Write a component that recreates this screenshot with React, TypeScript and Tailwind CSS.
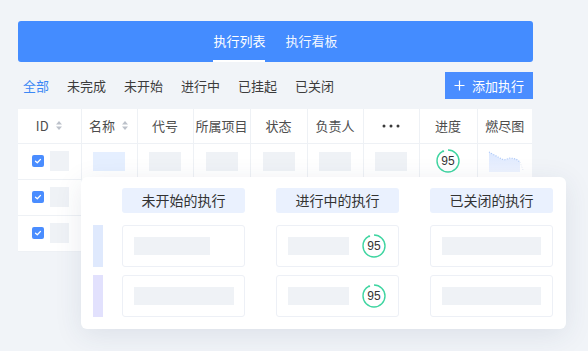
import React from "react"

const filters = ["全部", "未完成", "未开始", "进行中", "已挂起", "已关闭"]

const columns = [
  { label: "ID", w: "w-[63px]", sort: true },
  { label: "名称", w: "w-[56px]", sort: true },
  { label: "代号", w: "w-[56px]" },
  { label: "所属项目", w: "w-[57px]" },
  { label: "状态", w: "w-[57px]" },
  { label: "负责人", w: "w-[56px]" },
  { label: "more", w: "w-[56px]" },
  { label: "进度", w: "w-[58px]" },
  { label: "燃尽图", w: "w-[55px]" },
]

function SortIcon() {
  return (
    <svg width="8" height="11" viewBox="0 0 8 11" className="ml-[6px]">
      <path d="M4 1 L7 4.5 L1 4.5 Z" fill="#bcc1ca" />
      <path d="M4 10 L7 6.5 L1 6.5 Z" fill="#bcc1ca" />
    </svg>
  )
}

function Dots() {
  return (
    <svg width="18" height="4" viewBox="0 0 18 4">
      <circle cx="2" cy="2" r="1.5" fill="#3a3a3a" />
      <circle cx="9" cy="2" r="1.5" fill="#3a3a3a" />
      <circle cx="16" cy="2" r="1.5" fill="#3a3a3a" />
    </svg>
  )
}

function Check() {
  return (
    <div className="flex h-3 w-3 items-center justify-center rounded-[2px] bg-[#4a8dff]">
      <svg width="8" height="8" viewBox="0 0 8 8">
        <polyline points="1.5,4.2 3.3,5.8 6.5,2.4" fill="none" stroke="#fff" strokeWidth="1.3" strokeLinecap="round" strokeLinejoin="round" />
      </svg>
    </div>
  )
}

function Ring() {
  const r = 11
  const c = 2 * Math.PI * r
  return (
    <div className="relative flex h-[24px] w-[24px] items-center justify-center">
      <svg width="24" height="24" viewBox="0 0 24 24" className="absolute inset-0">
        <circle
          cx="12"
          cy="12"
          r={r}
          fill="none"
          stroke="#3fd5a1"
          strokeWidth="1.4"
          strokeDasharray={`${c * 0.92} ${c}`}
          transform="rotate(-90 12 12)"
        />
        <circle cx="7.2" cy="2.3" r="1" fill="#3fd5a1" />
      </svg>
      <span className="relative text-[12px] leading-none text-[#333] [font-family:'Liberation_Sans',sans-serif]">95</span>
    </div>
  )
}

function Burndown() {
  return (
    <svg width="36" height="23" viewBox="0 0 36 23">
      <defs>
        <linearGradient id="bd" x1="0" y1="0" x2="0" y2="1">
          <stop offset="0" stopColor="#dce8ff" />
          <stop offset="1" stopColor="#eef3ff" />
        </linearGradient>
      </defs>
      <path d="M1 2 L10 7 L16 10 L22 8 L28 9 L32 12 L32 22 L1 22 Z" fill="url(#bd)" />
      <polyline points="1,2 10,7 16,10 22,8 28,9 32,12" fill="none" stroke="#a9c6f7" strokeWidth="1.2" strokeDasharray="1 1.5" />
      <polyline points="32,12 35,20" fill="none" stroke="#e3eaf5" strokeWidth="1" strokeDasharray="1 1.5" />
    </svg>
  )
}

function Block({ blue }: { blue?: boolean }) {
  return <div className={`mx-auto h-[19px] w-[32px] ${blue ? "bg-[#e5efff]" : "bg-[#eff2f6]"}`} />
}

const cell = "border-b border-r border-[#eef1f5] bg-white"

// rows 2 and 3 sit under the board card, so only their first column is drawn
function Row({ full }: { full?: boolean }) {
  return (
    <tr className="h-[36px]">
      <td className={cell}>
        <div className="flex items-center pl-[14px]">
          <Check />
          <div className="ml-[6px] h-[20px] w-[19px] bg-[#eff2f6]" />
        </div>
      </td>
      <td className={cell}>{full && <Block blue />}</td>
      <td className={cell}>{full && <Block />}</td>
      <td className={cell}>{full && <Block />}</td>
      <td className={cell}>{full && <Block />}</td>
      <td className={cell}>{full && <Block />}</td>
      <td className={cell}>{full && <Block />}</td>
      <td className={cell}>
        {full && <div className="flex justify-center"><Ring /></div>}
      </td>
      <td className="border-b border-[#eef1f5] bg-white">
        {full && <div className="flex justify-center pl-[3px]"><Burndown /></div>}
      </td>
    </tr>
  )
}

function Card({ bar, ring }: { bar: string; ring?: boolean }) {
  return (
    <div className="flex h-[42px] items-center rounded-[3px] border border-[#edf0f6] bg-white pl-[11px]">
      <div className={`h-[18px] bg-[#eff2f6] ${bar}`} />
      {ring && <div className="ml-[13px]"><Ring /></div>}
    </div>
  )
}

const board = [
  { title: "未开始的执行", cards: [{ bar: "w-[76px]" }, { bar: "w-[100px]" }] },
  { title: "进行中的执行", cards: [{ bar: "w-[61px]", ring: true }, { bar: "w-[61px]", ring: true }] },
  { title: "已关闭的执行", cards: [{ bar: "w-[99px]" }, { bar: "w-[99px]" }] },
]

export default function App() {
  return (
    <div className="h-[351px] w-[588px] overflow-hidden bg-[#f1f4f8] pl-[18px] pt-[21px] [font-family:'Noto_Sans_CJK_SC',sans-serif]">
      <div className="w-[515px]">
        <div className="flex h-[41px] items-end justify-center gap-[20px] rounded-[3px] bg-[#448cff]">
          <div className="flex h-full flex-col items-center justify-center">
            <div className="flex flex-1 items-center text-[13px] text-white">执行列表</div>
            <div className="h-[2px] w-[52px] bg-white" />
          </div>
          <div className="flex h-full flex-col items-center justify-center">
            <div className="flex flex-1 items-center text-[13px] text-white/95">执行看板</div>
            <div className="h-[2px] w-[52px]" />
          </div>
        </div>

        <div className="mt-[10px] flex items-center justify-between">
          <div className="flex items-center gap-[18px] pl-[5px]">
            {filters.map((f, i) => (
              <span key={f} className={`text-[13px] ${i === 0 ? "text-[#3b88f5]" : "text-[#3c3c3c]"}`}>
                {f}
              </span>
            ))}
          </div>
          <div className="flex h-[27px] w-[88px] items-center justify-center gap-[7px] bg-[#4a8dff] text-[13px] text-white">
            <svg width="11" height="11" viewBox="0 0 11 11">
              <path d="M5.5 0.5 V10.5 M0.5 5.5 H10.5" stroke="#fff" strokeWidth="1.2" />
            </svg>
            添加执行
          </div>
        </div>

        <div className="relative mt-[10px]">
          <table className="w-[514px] table-fixed border-collapse">
            <thead>
              <tr className="h-[34px]">
                {columns.map((c, i) => (
                  <th
                    key={c.label}
                    className={`${c.w} border-b border-[#eef1f5] bg-white p-0 text-[13px] font-normal text-[#4d4d4d] ${i < columns.length - 1 ? "border-r" : ""}`}
                  >
                    <div className="flex items-center justify-center">
                      {c.label === "more" ? <Dots /> : <span>{c.label}</span>}
                      {c.sort && <SortIcon />}
                    </div>
                  </th>
                ))}
              </tr>
            </thead>
            <tbody>
              <Row full />
              <Row />
              <Row />
            </tbody>
          </table>

          <div className="absolute left-[63px] top-[68px] flex h-[152px] w-[485px] rounded-[6px] bg-white px-[12px] pb-[12px] pt-[11px] shadow-[0_6px_28px_rgba(40,60,100,0.10)]">
            <div className="mr-[19px] flex w-[10px] flex-col gap-[8px] pt-[37px]">
              <div className="h-[42px] bg-[#dfe9fd]" />
              <div className="h-[42px] bg-[#e2e1fd]" />
            </div>
            <div className="flex gap-[31px]">
              {board.map((col) => (
                <div key={col.title} className="flex w-[123px] flex-col">
                  <div className="flex h-[25px] items-center justify-center rounded-[3px] bg-[#eaf1fe] text-[14px] text-[#333]">
                    {col.title}
                  </div>
                  <div className="mt-[12px] flex flex-col gap-[8px]">
                    {col.cards.map((c, i) => (
                      <Card key={i} bar={c.bar} ring={c.ring} />
                    ))}
                  </div>
                </div>
              ))}
            </div>
          </div>
        </div>
      </div>
    </div>
  )
}
